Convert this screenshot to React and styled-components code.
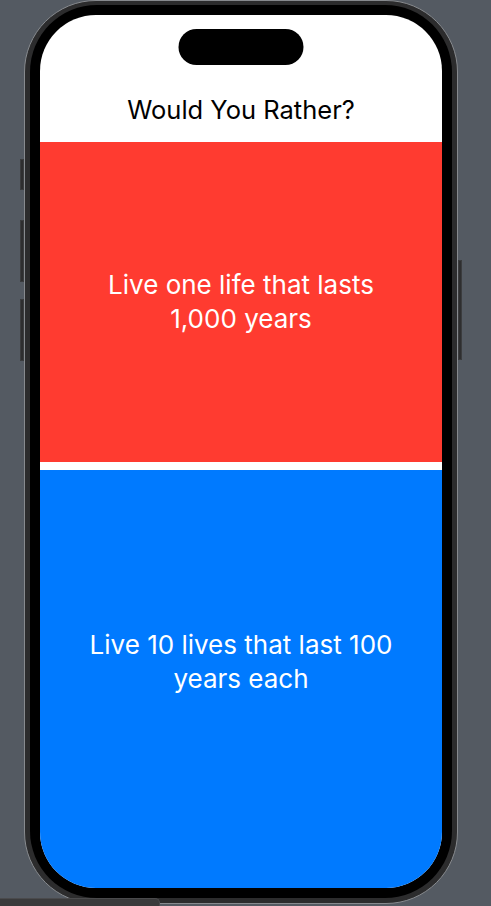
import React from "react"
import styled, { createGlobalStyle } from "styled-components"

const GlobalStyle = createGlobalStyle`
  html, body {
    margin: 0;
    padding: 0;
    background-color: #545a62;
    overflow: hidden;
  }

  body {
    font-family: Inter, "Liberation Sans", sans-serif;
  }
`

const Stage = styled.div`
  width: 491px;
  height: 906px;
  position: relative;
  overflow: hidden;
`

const Phone = styled.div`
  position: relative;
  margin-left: 24px;
  width: 434px;
  height: 904px;
  box-sizing: border-box;
  border-radius: 72px;
  border: 1px solid #878a8e;
  background-color: #2c2c2d;
  padding: 4px 5px 5px 5px;
`

const Bezel = styled.div`
  height: 100%;
  box-sizing: border-box;
  border-radius: 67px;
  background-color: #000;
  padding: 10px;
`

// hardware buttons sit on the edge of the phone body
const SideButton = styled.div`
  position: absolute;
  width: 4px;
  top: ${({ top }) => top}px;
  height: ${({ length }) => length}px;
  ${({ side }) => (side === "right" ? "right: -5px;" : "left: -5px;")}
  background-color: #2e2e2f;
  border-radius: 1px;
  box-shadow: inset 0 0 0 1px #3b3c3e;
`

const Screen = styled.div`
  position: relative;
  height: 100%;
  border-radius: 56px;
  overflow: hidden;
  background-color: #fff;
  display: flex;
  flex-direction: column;
`

const Island = styled.div`
  position: absolute;
  top: 14px;
  left: 50%;
  transform: translateX(-50%);
  width: 125px;
  height: 36px;
  border-radius: 18px;
  background-color: #000;
`

const Header = styled.header`
  height: 127px;
  box-sizing: border-box;
  padding-top: 80px;
  text-align: center;
`

const Title = styled.h1`
  margin: 0;
  font-size: 25.5px;
  line-height: 30px;
  font-weight: 400;
  color: #000;
`

const Options = styled.div`
  flex: 1;
  display: flex;
  flex-direction: column;
  gap: 8px;
`

const Option = styled.button`
  border: none;
  margin: 0;
  height: ${({ height }) => height}px;
  flex: ${({ grow }) => (grow ? 1 : "none")};
  box-sizing: border-box;
  padding: 0 40px ${({ inset }) => inset || 0}px;
  background-color: ${({ tint }) => tint};
  color: #fff;
  font-family: inherit;
  font-size: 26px;
  line-height: 34px;
  display: flex;
  align-items: center;
  justify-content: center;
  text-align: center;
`

const DockBar = styled.div`
  position: absolute;
  left: 0;
  bottom: 0;
  width: 160px;
  height: 8px;
  background-color: #3a3a3b;
  border-top: 1px solid #4a4a4c;
  border-right: 1px solid #4a4a4c;
  border-top-right-radius: 5px;
  box-sizing: border-box;
`

const App = () => {
  return (
    <Stage>
      <GlobalStyle />
      <Phone>
        <SideButton top={158} length={31} />
        <SideButton top={219} length={62} />
        <SideButton top={298} length={62} />
        <SideButton side="right" top={259} length={100} />
        <Bezel>
          <Screen>
            <Island />
            <Header>
              <Title>Would You Rather?</Title>
            </Header>
            <Options>
              <Option tint="#ff3b30" height={320}>
                Live one life that lasts 1,000 years
              </Option>
              <Option tint="#007aff" grow inset={34}>
                Live 10 lives that last 100 years each
              </Option>
            </Options>
          </Screen>
        </Bezel>
      </Phone>
      <DockBar />
    </Stage>
  )
}

export default App
